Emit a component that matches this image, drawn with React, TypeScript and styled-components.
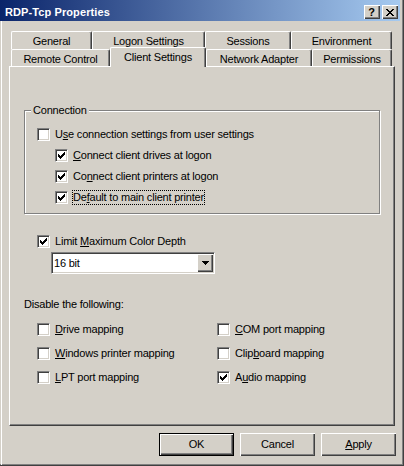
import React from 'react'
import styled, { createGlobalStyle, css } from 'styled-components'

const FACE = '#d4d0c8'
const SHADOW = '#808080'
const DARK = '#404040'

const TICK = [
  '......#',
  '.....##',
  '#...###',
  '##.###.',
  '#####..',
  '.###...',
  '..#....'
]

const CLOSE = [
  '##....##',
  '.##..##.',
  '..####..',
  '...##...',
  '..####..',
  '.##..##.',
  '##....##'
]

const ARROW = [
  '#######',
  '.#####.',
  '..###..',
  '...#...'
]

const topTabs = [
  { label: 'General', width: 81 },
  { label: 'Logon Settings', width: 113 },
  { label: 'Sessions', width: 86 },
  { label: 'Environment', width: 101 }
]

const bottomTabs = [
  { label: 'Remote Control', width: 99 },
  { label: 'Client Settings', width: 96, active: true },
  { label: 'Network Adapter', width: 106 },
  { label: 'Permissions', width: 80 }
]

interface MappingItem {
  before: string
  key: string
  after: string
  checked?: boolean
}

const mappings: MappingItem[] = [
  { before: '', key: 'D', after: 'rive mapping' },
  { before: '', key: 'C', after: 'OM port mapping' },
  { before: '', key: 'W', after: 'indows printer mapping' },
  { before: 'Clip', key: 'b', after: 'oard mapping' },
  { before: '', key: 'L', after: 'PT port mapping' },
  { before: 'A', key: 'u', after: 'dio mapping', checked: true }
]

export default function App () {
  return (
    <>
      <GlobalStyle />
      <Window>
        <TitleBar>
          <Title>RDP-Tcp Properties</Title>
          <TitleButtons>
            <TitleButton>?</TitleButton>
            <TitleButton><Pixels rows={CLOSE} /></TitleButton>
          </TitleButtons>
        </TitleBar>
        <Body>
          <TabStrip>
            <TabRow>
              {topTabs.map(tab => (
                <Tab key={tab.label} $width={tab.width} $row='top'>{tab.label}</Tab>
              ))}
            </TabRow>
            <TabRow>
              {bottomTabs.map(tab => (
                <Tab key={tab.label} $width={tab.width} $row='bottom' $active={tab.active}>{tab.label}</Tab>
              ))}
            </TabRow>
          </TabStrip>
          <Panel>
            <GroupBox>
              <GroupLegend>Connection</GroupLegend>
              <GroupRows>
                <CheckRow>
                  <CheckBox />
                  <Label>U<Key>s</Key>e connection settings from user settings</Label>
                </CheckRow>
                <CheckRow $indent={18}>
                  <CheckBox checked />
                  <Label><Key>C</Key>onnect client drives at logon</Label>
                </CheckRow>
                <CheckRow $indent={18}>
                  <CheckBox checked />
                  <Label>Co<Key>n</Key>nect client printers at logon</Label>
                </CheckRow>
                <CheckRow $indent={18}>
                  <CheckBox checked />
                  <Label $focus>De<Key>f</Key>ault to main client printer</Label>
                </CheckRow>
              </GroupRows>
            </GroupBox>

            <DepthRow>
              <CheckBox checked />
              <Label>Limit <Key>M</Key>aximum Color Depth</Label>
            </DepthRow>
            <Select>
              <SelectValue>16 bit</SelectValue>
              <DropButton><Pixels rows={ARROW} /></DropButton>
            </Select>

            <SectionText>Disable the following:</SectionText>
            <MappingGrid>
              {mappings.map(item => (
                <CheckRow key={item.before + item.key + item.after}>
                  <CheckBox checked={item.checked} />
                  <Label>{item.before}<Key>{item.key}</Key>{item.after}</Label>
                </CheckRow>
              ))}
            </MappingGrid>
          </Panel>
          <Footer>
            <Button $default>OK</Button>
            <Button>Cancel</Button>
            <Button><Key>A</Key>pply</Button>
          </Footer>
        </Body>
      </Window>
    </>
  )
}

function Pixels ({ rows, color = '#000' }: { rows: string[], color?: string }) {
  return (
    <PixelSvg width={rows[0].length} height={rows.length} shapeRendering='crispEdges'>
      {rows.flatMap((row, y) =>
        row.split('').map((c, x) =>
          c === '#' ? <rect key={`${x}-${y}`} x={x} y={y} width={1} height={1} fill={color} /> : null
        )
      )}
    </PixelSvg>
  )
}

function CheckBox ({ checked }: { checked?: boolean }) {
  return <Box>{checked && <Pixels rows={TICK} />}</Box>
}

const GlobalStyle = createGlobalStyle`
  html, body {
    margin: 0;
    padding: 0;
    background: ${FACE};
  }

  body {
    font-family: "Liberation Sans", Arial, sans-serif;
    font-size: 11px;
    line-height: 13px;
    letter-spacing: -0.2px;
    color: #000;
  }
`

const raised = css`
  background: ${FACE};
  box-shadow: inset 1px 1px #fff, inset -1px -1px ${DARK}, inset -2px -2px ${SHADOW};
`

const sunken = css`
  background: #fff;
  border: 1px solid;
  border-color: ${SHADOW} #fff #fff ${SHADOW};
  box-shadow: inset 1px 1px ${DARK}, inset -1px -1px ${FACE};
`

const Window = styled.div`
  box-sizing: border-box;
  width: 404px;
  height: 466px;
  background: ${FACE};
  border-right: 1px solid ${DARK};
  border-bottom: 1px solid ${DARK};
  box-shadow: inset -1px -1px ${SHADOW};
  display: flex;
  flex-direction: column;
  overflow: hidden;
`

const TitleBar = styled.div`
  height: 21px;
  margin-right: 3px;
  padding: 0 2px 0 5px;
  display: flex;
  align-items: center;
  justify-content: space-between;
  background: linear-gradient(to right, #0a246a, #a6caf0);
`

const Title = styled.span`
  color: #fff;
  font-weight: bold;
  font-size: 11px;
  letter-spacing: 0.1px;
  white-space: nowrap;
  padding-top: 4px;
`

const TitleButtons = styled.div`
  display: flex;
  gap: 2px;
  padding-top: 3px;
`

const TitleButton = styled.span`
  ${raised}
  width: 16px;
  height: 14px;
  display: flex;
  align-items: center;
  justify-content: center;
  font-weight: bold;
  font-size: 11px;
  letter-spacing: 0;
  padding-right: 1px;
  box-sizing: border-box;
`

const PixelSvg = styled.svg`
  display: block;
  flex: none;
`

const Body = styled.div`
  flex: 1;
  margin-left: 1px;
  border-left: 1px solid #fff;
  padding: 10px 0 0 7px;
`

const TabStrip = styled.div`
  margin-left: 2px;
  width: 381px;
  display: flex;
  flex-direction: column;
`

const TabRow = styled.div`
  display: flex;
  align-items: flex-end;
`

const Tab = styled.div<{ $width: number, $row: 'top' | 'bottom', $active?: boolean }>`
  box-sizing: border-box;
  width: ${p => p.$width}px;
  height: ${p => (p.$row === 'top' ? 18 : 17)}px;
  padding-top: 3px;
  text-align: center;
  white-space: nowrap;
  background: ${FACE};
  border-top: 1px solid #fff;
  border-left: 1px solid #fff;
  border-right: 1px solid ${DARK};
  border-radius: 2px 2px 0 0;
  box-shadow: inset -1px 0 ${SHADOW};

  ${p => p.$active && css`
    position: relative;
    z-index: 1;
    height: 20px;
    margin: -2px 0 -1px;
  `}
`

const Panel = styled.div`
  box-sizing: border-box;
  width: 386px;
  height: 360px;
  border: 1px solid;
  border-color: #fff ${DARK} ${DARK} #fff;
  box-shadow: inset -1px -1px ${SHADOW};
  display: flex;
  flex-direction: column;
  align-items: flex-start;
`

const GroupBox = styled.fieldset`
  box-sizing: border-box;
  width: 356px;
  margin: 37px 0 0 14px;
  padding: 11px 8px 9px 6px;
  border: 1px solid ${SHADOW};
  box-shadow: inset 1px 1px #fff, 1px 1px #fff;
  min-inline-size: 0;
`

const GroupLegend = styled.legend`
  padding: 0 2px;
  background: ${FACE};
`

const GroupRows = styled.div`
  display: flex;
  flex-direction: column;
  gap: 8px;
  padding-left: 6px;
`

const CheckRow = styled.div<{ $indent?: number }>`
  display: flex;
  align-items: flex-start;
  gap: 5px;
  margin-left: ${p => p.$indent ?? 0}px;
`

const Box = styled.span`
  ${sunken}
  box-sizing: border-box;
  width: 13px;
  height: 13px;
  flex: none;
  display: flex;
  align-items: center;
  justify-content: center;
`

const Label = styled.span<{ $focus?: boolean }>`
  white-space: nowrap;

  ${p => p.$focus && css`
    outline: 1px dotted #000;
    outline-offset: 0;
  `}
`

const Key = styled.span`
  text-decoration: underline;
`

const DepthRow = styled(CheckRow)`
  margin: 21px 0 0 27px;
`

const Select = styled.div`
  ${sunken}
  box-sizing: border-box;
  width: 164px;
  height: 22px;
  margin: 4px 0 0 41px;
  display: flex;
  align-items: center;
`

const SelectValue = styled.span`
  flex: 1;
  padding-left: 2px;
`

const DropButton = styled.span`
  ${raised}
  box-sizing: border-box;
  width: 16px;
  height: 18px;
  margin-right: 1px;
  display: flex;
  align-items: center;
  justify-content: center;
`

const SectionText = styled.div`
  margin: 24px 0 0 14px;
`

const MappingGrid = styled.div`
  display: grid;
  grid-template-columns: 180px 160px;
  row-gap: 11px;
  margin: 12px 0 0 27px;
`

const Footer = styled.div`
  width: 387px;
  display: flex;
  justify-content: flex-end;
  gap: 6px;
  margin-top: 7px;
`

const Button = styled.button<{ $default?: boolean }>`
  ${raised}
  box-sizing: border-box;
  width: 75px;
  height: 23px;
  margin: 0;
  padding: 0;
  border: none;
  font: inherit;
  letter-spacing: inherit;
  color: #000;

  ${p => p.$default && css`
    border: 1px solid #000;
  `}
`
